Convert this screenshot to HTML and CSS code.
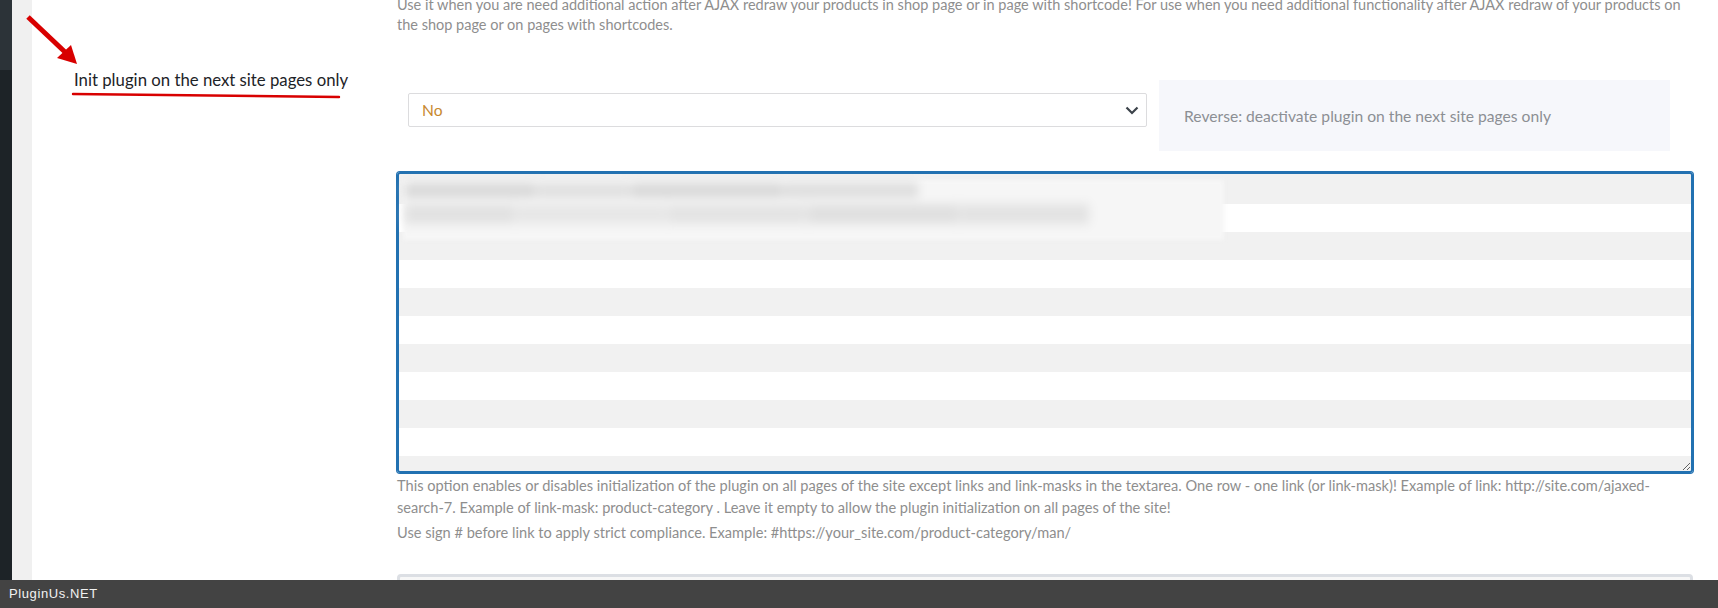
FILE: index.html
```html
<!DOCTYPE html>
<html lang="en">
<head>
<meta charset="utf-8">
<title>Init plugin options</title>
<link rel="stylesheet" href="styles.css">
</head>
<body>
<div class="layout">
  <aside class="adminmenu">
    <div class="adminmenu-top"></div>
    <div class="adminmenu-rest"></div>
  </aside>
  <div class="gutter"></div>
  <main class="main">
    <div class="opt-row opt-row--prev">
      <div class="opt-label"></div>
      <div class="opt-field">
        <p class="desc desc--top">Use it when you are need additional action after AJAX redraw your products in shop page or in page with shortcode! For use when you need additional functionality after AJAX redraw of your products on the shop page or on pages with shortcodes.</p>
      </div>
    </div>
    <div class="opt-row opt-row--main">
      <div class="opt-label"><span class="label-text">Init plugin on the next site pages only</span></div>
      <div class="opt-field">
        <div class="select-row">
          <div class="select">
            <span class="select-value">No</span>
            <svg class="chevron" width="14" height="9" viewBox="0 0 14 9"><path d="M1.5 1.5 L7 7 L12.5 1.5" fill="none" stroke="#3c434a" stroke-width="2.2"/></svg>
          </div>
          <div class="reverse-box"><span class="reverse-text">Reverse: deactivate plugin on the next site pages only</span></div>
        </div>
        <div class="links-field">
          <textarea class="links-textarea" aria-label="Pages"></textarea>
          <div class="redact">
            <div class="redact-line redact-line--one">
              <span class="redact-word redact-word--a"></span>
              <span class="redact-word redact-word--b"></span>
              <span class="redact-word redact-word--c"></span>
              <span class="redact-word redact-word--d"></span>
            </div>
            <div class="redact-line redact-line--two">
              <span class="redact-word redact-word--e"></span>
              <span class="redact-word redact-word--f"></span>
              <span class="redact-word redact-word--g"></span>
              <span class="redact-word redact-word--h"></span>
              <span class="redact-word redact-word--i"></span>
            </div>
          </div>
        </div>
        <p class="desc desc--bottom desc--first">This option enables or disables initialization of the plugin on all pages of the site except links and link-masks in the textarea. One row - one link (or link-mask)! Example of link: http://site.com/ajaxed-search-7. Example of link-mask: product-category . Leave it empty to allow the plugin initialization on all pages of the site!</p>
        <p class="desc desc--bottom desc--second">Use sign # before link to apply strict compliance. Example: #https://your_site.com/product-category/man/</p>
      </div>
    </div>
    <div class="opt-row opt-row--next">
      <div class="opt-label"></div>
      <div class="opt-field"><div class="next-box"></div></div>
    </div>
  </main>
</div>
<svg class="annotation" width="400" height="110" viewBox="0 0 400 110">
  <line x1="28" y1="17" x2="65" y2="52" stroke="#d80000" stroke-width="5"/>
  <polygon points="77,64 57,58 71,45" fill="#d80000"/>
  <path d="M73 94 L339 97" stroke="#d80000" stroke-width="2.4" stroke-linecap="round" fill="none"/>
</svg>
<div class="footer-bar">PluginUs.NET</div>
</body>
</html>
```

FILE: styles.css
```css
html, body { margin: 0; padding: 0; }
body {
  font-family: Lato, "Noto Sans", sans-serif;
  background: #fff;
  width: 1718px;
  height: 608px;
  overflow: hidden;
}
.layout { display: flex; height: 608px; }
.adminmenu { width: 12px; display: flex; flex-direction: column; }
.adminmenu-top { height: 70px; background: #2c3338; }
.adminmenu-rest { flex: 1; background: #1d2327; }
.gutter { width: 20px; background: #f0f0f0; }
.main { flex: 1; background: #fff; padding-right: 25px; }
.opt-row { display: grid; grid-template-columns: 365px 1fr; }
.opt-label { padding-left: 42px; }
.opt-row--prev { margin-top: -5px; }
.opt-row--main { margin-top: 36px; }
.desc { margin: 0; color: #8e8e8e; }
.desc--top { font-size: 14.5px; line-height: 20px; }
.desc--bottom { font-size: 14.6px; line-height: 22px; }
.desc--first { margin-top: 2px; }
.desc--second { margin-top: 3px; }
.label-text { display: block; margin-top: -1px; font-size: 16.75px; line-height: 20px; color: #1d2327; }
.select-row { display: flex; align-items: flex-start; gap: 12px; margin-top: 9px; padding: 0 23px 0 11px; }
.select {
  flex: 0 0 739px; box-sizing: border-box; height: 34px; margin-top: 13px;
  border: 1px solid #dcdcde; border-radius: 2px; background: #fff;
  display: flex; align-items: center; justify-content: space-between; padding: 0 7px 0 13px;
}
.select-value { color: #c8892e; font-size: 15.6px; }
.reverse-box {
  flex: 1; height: 71px; background: #f6f7fb; display: flex; align-items: center; padding-left: 25px;
}
.reverse-text { color: #8c8f94; font-size: 15.65px; }
.links-field { position: relative; margin-top: 21px; }
.links-textarea {
  display: block; width: 100%; height: 301px; box-sizing: border-box; margin: 0; resize: vertical;
  border: 2px solid #2271b1; box-shadow: 0 0 0 1px #2271b1; border-radius: 3px; outline: none;
  background: repeating-linear-gradient(#f1f1f1 0 28px, #fff 28px 56px);
  background-position: 0 2px;
}
.redact { position: absolute; left: 6px; top: 8px; width: 821px; height: 60px; background: #f6f6f6; filter: blur(2px); }
.redact-line { position: absolute; left: 2px; display: flex; gap: 1px; filter: blur(4px); }
.redact-line--one { top: 3px; height: 15px; }
.redact-line--two { top: 24px; height: 20px; }
.redact-word { display: block; height: 100%; background: #dedede; }
.redact-word--a { width: 130px; background: #d9d9d9; }
.redact-word--b { width: 95px; background: #e0e0e0; }
.redact-word--c { width: 150px; background: #d9d9d9; }
.redact-word--d { width: 135px; background: #dedede; }
.redact-word--e { width: 110px; background: #e2e2e2; }
.redact-word--f { width: 150px; background: #e7e7e7; }
.redact-word--g { width: 140px; background: #e4e4e4; }
.redact-word--h { width: 150px; background: #e0e0e0; }
.redact-word--i { width: 130px; background: #e3e3e3; }
.next-box { margin-top: 30px; height: 60px; box-sizing: border-box; border: 3px solid #dcdfe4; border-radius: 4px; background: #f7f7f7; }
.annotation { position: absolute; left: 0; top: 0; }
.footer-bar {
  position: fixed; left: 0; right: 0; bottom: 0; height: 28px; background: #434343;
  color: #f2f2f2; font-family: "Liberation Sans", sans-serif; font-size: 13px; line-height: 28px;
  letter-spacing: 0.6px; padding-left: 9px;
}
```
